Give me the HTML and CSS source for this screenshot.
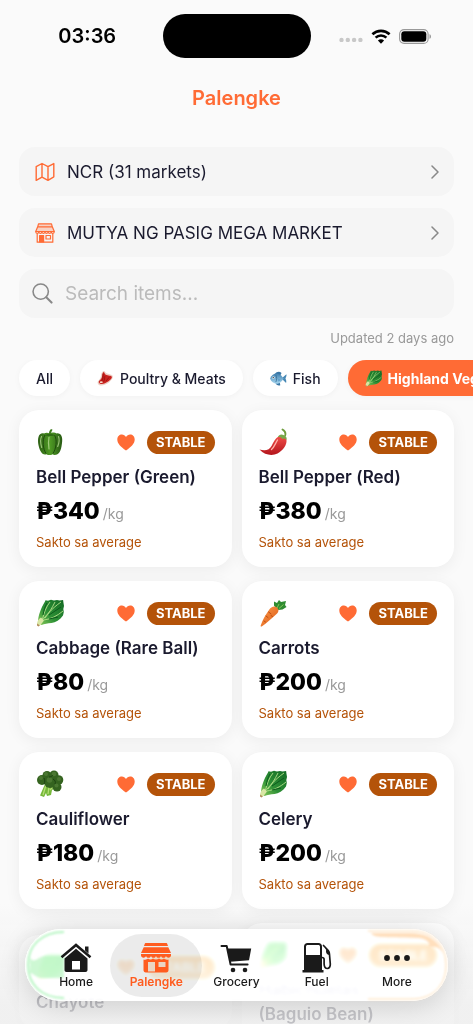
FILE: index.html
```html
<!DOCTYPE html>
<html lang="fil">
<head>
    <meta charset="UTF-8">
    <meta name="viewport" content="width=device-width, initial-scale=1.0">
    <title>Palengke</title>
    <link rel="stylesheet" href="styles.css">
</head>
<body>
    <!-- Shared icons -->
    <svg class="sprite" aria-hidden="true">
        <defs>
            <linearGradient id="g-pepper" x1="0" x2="1"><stop offset="0" stop-color="#2c5f14"/><stop offset=".5" stop-color="#4f9a24"/><stop offset="1" stop-color="#285a13"/></linearGradient>
            <linearGradient id="g-chili" x1="0" y1="0" x2="0" y2="1"><stop offset="0" stop-color="#f4504a"/><stop offset="1" stop-color="#b3151c"/></linearGradient>
            <linearGradient id="g-leaf" x1="0" y1="1" x2="1" y2="0"><stop offset="0" stop-color="#8ccb5a"/><stop offset=".4" stop-color="#2e9136"/><stop offset="1" stop-color="#126a24"/></linearGradient>
            <linearGradient id="g-carrot" x1="0" y1="0" x2="1" y2="1"><stop offset="0" stop-color="#ff9a4a"/><stop offset="1" stop-color="#d95a16"/></linearGradient>
            <linearGradient id="g-fish" x1="0" y1="0" x2="0" y2="1"><stop offset="0" stop-color="#3f7fae"/><stop offset="1" stop-color="#a9d8f0"/></linearGradient>
        </defs>
        <symbol id="pepper" viewBox="0 0 28 28">
            <path d="M13 7c-.2-3 .3-4.500 2-6l1.600.8c-1.300 1.500-1.500 3-1.200 5.200z" fill="#3f7d1e"/>
            <path d="M14 6c2-2 5-1.600 6.500-.6 4.600-.6 6.500 3.600 5.500 9.600-.6 5-1.500 10-5 11.500-2 .8-3.500.5-4.500-.3-1.500 1.200-4.500 1.200-6 0-2 .6-4.500.2-6-3.200C2.500 19 1.300 13 2.500 9c.8-3 3-4.200 5.500-3.500C10 4.500 12.500 4.700 14 6z" fill="url(#g-pepper)"/>
            <path d="M9 7c-3 5-2 14 1 18.500M18.500 7c3 5 1.500 14-1.500 18.500" fill="none" stroke="#1f4a0e" stroke-width="1"/>
            <path d="M5.500 8.500c-1.500 3-1 7 .2 11M13 9c-.8 4-.6 8 0 12M22.500 8.500c1.200 3 .4 7-.8 10" fill="none" stroke="#b9dc95" stroke-width="1.200" stroke-linecap="round" opacity=".75"/>
            <path d="M9 7.500c2-2 7-2.500 10 0-2 .2-3 .8-5 .4-2 .6-3 0-5-.4z" fill="#2f6a15"/>
        </symbol>
        <symbol id="chili" viewBox="0 0 28 28">
            <path d="M26 8c1-2.500 0-5-2.500-6.500" fill="none" stroke="#6f9d3d" stroke-width="1.800" stroke-linecap="round"/>
            <path d="M19.500 8.500c3-2.500 7.500-.5 8 3.500.5 5-3.500 10.500-9 13.500-5 2.500-12.500 2-18-4 6 1.500 10 .5 12-3.500 2.200-4 3.500-7.500 7-9.500z" fill="url(#g-chili)"/>
            <path d="M18.500 12c-2.500 4-3 7-6 9.500" fill="none" stroke="#ffb3a8" stroke-width="1.300" stroke-linecap="round"/>
            <path d="M19 9c1-3 5-4 8.500.5.3 1.200.2 2-.3 2.500-1.500-1.800-2.700-1.700-3.700-.8-.7-1.800-2.500-2.300-4.500-2.200z" fill="#79a84a"/>
        </symbol>
        <symbol id="leafy" viewBox="0 0 28 28">
            <path d="M2 23C2 17 5 9 9 2.500l.5-1.300 2.500.6 3-1 3 .8 3-.6 2.500.6 3.600-.6.400 3 .5 3-.7 3 .5 3-.8 3.500c-3 4.500-7.500 6.800-11.500 7.500-4 .5-7 .5-10 2z" fill="url(#g-leaf)"/>
            <path d="M4 24C9 18 15 10 25 3M6.500 20C8 14 10 8 14 3M9 19c4-5 7-10 10-16M8 21c7-1 13-4 19-9" fill="none" stroke="#b4e08a" stroke-width=".9"/>
            <path d="M7 16c1-5 2-9 4-12M13 16l12-8M13 20l9-2" fill="none" stroke="#0c5a1c" stroke-width="1"/>
            <path d="M1 25c.2-3 1.500-5 4-6.500l3 3C6.500 24 5 25 4.500 26l-2 1z" fill="#d9e6a4"/>
            <path d="M1.200 24.600l2.700 2-1.500.8-1.400-1z" fill="#b08a5a"/>
        </symbol>
        <symbol id="carrot" viewBox="0 0 28 28">
            <path d="M15 6.500l0-4 3 1.500 2-3 2 2 5-1-1 4 1.500 2-4 2.500-4 .5-3-2.500z" fill="#2f8b31"/>
            <path d="M18 9l2-4M20 9.500l4.500-4" fill="none" stroke="#81c654" stroke-width="1"/>
            <path d="M10 11c1.800-3 5.500-4.500 8-2.500 2.500 2.500 1.500 5-1 7-5 4.200-9 8.500-14.300 12-.8.300-1.300-.2-1-.9C3.500 21 6.500 16 10 11z" fill="url(#g-carrot)"/>
            <path d="M9.500 13l2.500 1.800M7 17l2 1.500M13.500 17.500l-1.500-1M5 22l1.500 1" stroke="#b94a10" stroke-width=".9" stroke-linecap="round"/>
        </symbol>
        <symbol id="broccoli" viewBox="0 0 28 28">
            <path d="M9 14l-5 11.500 4 1.500 2-4 1 3 4-1 1-5 5-3-3-5z" fill="#76b83a"/>
            <path d="M10 15L7 25M13 17l-1 7M18 16l-4 4" fill="none" stroke="#b6de76" stroke-width="1.300"/>
            <g fill="#34631f"><circle cx="6" cy="10" r="5"/><circle cx="11" cy="5.500" r="4.500"/><circle cx="18" cy="5" r="4.500"/><circle cx="22.500" cy="10" r="4.800"/><circle cx="21" cy="17" r="4.500"/><circle cx="14" cy="12" r="6"/></g>
            <g fill="#4b7832"><circle cx="5" cy="8" r="2"/><circle cx="10" cy="4" r="2"/><circle cx="18" cy="4" r="2.300"/><circle cx="23" cy="9" r="2"/><circle cx="13.500" cy="10" r="2.800"/><circle cx="20.500" cy="15.500" r="2"/></g>
            <path d="M8 8c1 2 1 4 0 6M17 9c2 1 3 3 2 5M13 7c2 0 3-1 4-2" fill="none" stroke="#1d4212" stroke-width="1"/>
        </symbol>
        <symbol id="meat" viewBox="0 0 28 28">
            <path d="M1 20c0-2 4-4 5-8 .8-4 1-8 4-10 1.500-1 3 0 4 2 2 3 10 2 12 6 1 3-2 7-6 10S8 27 4 25c-2-1-3-3-3-5z" fill="#ecd0c6"/>
            <path d="M3 19c1-2 4-3.500 5-7 1-3.500.5-6.500 2.500-8.500C12 3 12 5 13.500 7c2 2.500 9 1.500 11 4 .5 2-2 5-5.500 7.500C14 22 9 24 5 22.500 3.500 22 2.500 20.500 3 19z" fill="#c9211e"/>
            <path d="M10 6c-.5 6 1 8-3 13M13 10c-1 4 0 5-2 9M20 12l-5 6" fill="none" stroke="#94100f" stroke-width="1.400"/>
            <ellipse cx="7" cy="20" rx="2.500" ry="1.500" fill="#f3d9c8"/>
        </symbol>
        <symbol id="fish" viewBox="0 0 28 28">
            <path d="M8 7c3-5 8-5 11-2l-2 4zM9 21c1 4 5 5 8 4l-1-5z" fill="#3a76a5"/>
            <path d="M19 14l8-7c.8 3-.8 5-1.500 7 .8 2 2 4 1 7.500z" fill="#4788b5"/>
            <path d="M0 14c3-7 8-9 13-8 4 1 7 4 9.500 8-3 5-6 8-10.500 8.500C7 23 2 20 0 14z" fill="url(#g-fish)"/>
            <path d="M9.500 8c2 4 2 8 0 12" fill="none" stroke="#2f6894" stroke-width="1.200"/>
            <path d="M13 14l5 2-4 3z" fill="#5e9fca"/>
            <circle cx="5.500" cy="12.500" r="2" fill="#fff"/><circle cx="5.300" cy="12.500" r="1.100" fill="#111"/>
        </symbol>
        <symbol id="heart" viewBox="0 0 18 17">
            <path d="M9 16.500C3.800 12.800.3 9.400.3 5.400.3 2.600 2.300.5 4.900.5 6.600.5 8.100 1.500 9 3 9.900 1.500 11.400.5 13.100.5c2.600 0 4.600 2.100 4.600 4.900 0 4-3.500 7.400-8.700 11.100z" fill="currentColor"/>
        </symbol>
        <symbol id="chevron" viewBox="0 0 8 14">
            <path d="M1 1l6 6-6 6" fill="none" stroke="currentColor" stroke-width="1.500" stroke-linecap="round" stroke-linejoin="round"/>
        </symbol>
    </svg>

    <div class="app">
        <div class="status-bar">
            <span class="time">03:36</span>
            <span class="island"></span>
            <span class="signals">
                <svg width="24" height="12" viewBox="0 0 24 12" fill="#c8c8c8"><circle cx="2.500" cy="10" r="2.200"/><circle cx="8.800" cy="10" r="2.200"/><circle cx="15.100" cy="10" r="2.200"/><circle cx="21.400" cy="10" r="2.200"/></svg>
                <svg width="20" height="15" viewBox="0 0 20 15"><path d="M1.400 5.300C6.200.7 13.800.7 18.600 5.300" fill="none" stroke="#000" stroke-width="2.600"/><path d="M4.600 8.700c3-2.900 7.800-2.900 10.800 0" fill="none" stroke="#000" stroke-width="2.500"/><path d="M10 14.700l-3.100-3.200c1.700-1.600 4.500-1.600 6.200 0z"/></svg>
                <svg width="33" height="15" viewBox="0 0 33 15"><rect x=".6" y=".6" width="28.500" height="13.800" rx="4.500" fill="none" stroke="#999" stroke-width="1.100"/><rect x="2.300" y="2.300" width="25" height="10.400" rx="3"/><path d="M30.500 5.200c2 .6 2 4 0 4.600z" fill="#999"/></svg>
            </span>
        </div>

        <header>
            <h1>Palengke</h1>
        </header>

        <main>
            <div class="filters">
                <button class="field" type="button">
                    <svg class="field-icon" viewBox="0 0 20 20" fill="none" stroke="currentColor" stroke-width="1.400" stroke-linejoin="round"><path d="M1.200 4.600L7 1.500l6 3.200 5.800-3.100v13.200L13 18.300l-6-3.200-5.800 3.200zM7 1.500v13.600M13 4.700v13.600"/></svg>
                    <span>NCR (31 markets)</span>
                    <svg class="chevron"><use href="#chevron"/></svg>
                </button>
                <button class="field" type="button">
                    <svg class="field-icon" viewBox="0 0 20 20" fill="none" stroke="currentColor" stroke-width="1.200" stroke-linejoin="round"><path d="M3.500.8h13l.8 3H2.700zM2.700 3.800h14.600l2 4.700H.7z" fill="#ff6b35" fill-opacity=".25"/><path d="M.7 8.500c0 2.400 3.100 2.400 3.100 0 0 2.400 3.100 2.400 3.100 0 0 2.400 3.100 2.400 3.100 0 0 2.400 3.100 2.400 3.100 0 0 2.400 3.100 2.400 3.100 0 0 2.400 3.100 2.400 3.100 0M2.200 10.500v8.700h15.600v-8.700"/><path d="M4.600 12.500h4v6.500h-4z" fill="currentColor"/><path d="M11 12.500h4.500v3.500H11z"/></svg>
                    <span>MUTYA NG PASIG MEGA MARKET</span>
                    <svg class="chevron"><use href="#chevron"/></svg>
                </button>
                <label class="field search">
                    <svg class="search-icon" viewBox="0 0 20 20" fill="none" stroke="currentColor" stroke-width="1.500" stroke-linecap="round"><circle cx="8.300" cy="8.200" r="7.300"/><path d="M13.600 13.600l5 5" stroke-width="2"/></svg>
                    <input type="search" placeholder="Search items..." aria-label="Search items">
                </label>
            </div>

            <p class="updated">Updated 2 days ago</p>

            <div class="chips">
                <button class="chip" type="button">All</button>
                <button class="chip" type="button"><svg><use href="#meat"/></svg>Poultry &amp; Meats</button>
                <button class="chip" type="button"><svg><use href="#fish"/></svg>Fish</button>
                <button class="chip active" type="button"><svg><use href="#leafy"/></svg>Highland Vegetables</button>
            </div>

            <section class="items">
                <article class="card">
                    <div class="card-top">
                        <svg class="emoji"><use href="#pepper"/></svg>
                        <button class="fav" type="button" aria-label="Favorite"><svg><use href="#heart"/></svg></button>
                        <span class="badge">STABLE</span>
                    </div>
                    <h2>Bell Pepper (Green)</h2>
                    <p class="price">₱340<small>/kg</small></p>
                    <p class="note">Sakto sa average</p>
                </article>
                <article class="card">
                    <div class="card-top">
                        <svg class="emoji"><use href="#chili"/></svg>
                        <button class="fav" type="button" aria-label="Favorite"><svg><use href="#heart"/></svg></button>
                        <span class="badge">STABLE</span>
                    </div>
                    <h2>Bell Pepper (Red)</h2>
                    <p class="price">₱380<small>/kg</small></p>
                    <p class="note">Sakto sa average</p>
                </article>
                <article class="card">
                    <div class="card-top">
                        <svg class="emoji"><use href="#leafy"/></svg>
                        <button class="fav" type="button" aria-label="Favorite"><svg><use href="#heart"/></svg></button>
                        <span class="badge">STABLE</span>
                    </div>
                    <h2>Cabbage (Rare Ball)</h2>
                    <p class="price">₱80<small>/kg</small></p>
                    <p class="note">Sakto sa average</p>
                </article>
                <article class="card">
                    <div class="card-top">
                        <svg class="emoji"><use href="#carrot"/></svg>
                        <button class="fav" type="button" aria-label="Favorite"><svg><use href="#heart"/></svg></button>
                        <span class="badge">STABLE</span>
                    </div>
                    <h2>Carrots</h2>
                    <p class="price">₱200<small>/kg</small></p>
                    <p class="note">Sakto sa average</p>
                </article>
                <article class="card">
                    <div class="card-top">
                        <svg class="emoji"><use href="#broccoli"/></svg>
                        <button class="fav" type="button" aria-label="Favorite"><svg><use href="#heart"/></svg></button>
                        <span class="badge">STABLE</span>
                    </div>
                    <h2>Cauliflower</h2>
                    <p class="price">₱180<small>/kg</small></p>
                    <p class="note">Sakto sa average</p>
                </article>
                <article class="card">
                    <div class="card-top">
                        <svg class="emoji"><use href="#leafy"/></svg>
                        <button class="fav" type="button" aria-label="Favorite"><svg><use href="#heart"/></svg></button>
                        <span class="badge">STABLE</span>
                    </div>
                    <h2>Celery</h2>
                    <p class="price">₱200<small>/kg</small></p>
                    <p class="note">Sakto sa average</p>
                </article>
                <article class="card">
                    <div class="card-top">
                        <svg class="emoji"><use href="#leafy"/></svg>
                        <button class="fav" type="button" aria-label="Favorite"><svg><use href="#heart"/></svg></button>
                        <span class="badge">STABLE</span>
                    </div>
                    <h2>Chayote</h2>
                </article>
                <article class="card">
                    <div class="card-top">
                        <svg class="emoji"><use href="#leafy"/></svg>
                        <button class="fav" type="button" aria-label="Favorite"><svg><use href="#heart"/></svg></button>
                        <span class="badge">STABLE</span>
                    </div>
                    <h2>Habichuelas<br>(Baguio Bean)</h2>
                </article>
            </section>
        </main>

        <div class="fade"></div>
        <nav class="tab-bar">
            <svg class="edge edge-left" viewBox="0 0 40 72" fill="none" stroke="#b5f5c1" stroke-width="2"><path d="M39 3C16 3 3 17 3 36s13 33 36 33"/><path d="M5 28c3 8 8 0 14-1h20v22H19C12 50 8 44 5 44z" fill="#b8f5c0" stroke="none" opacity=".7"/></svg>
            <svg class="edge edge-right" viewBox="0 0 80 72" fill="none" stroke="#ffdcb0" stroke-width="2"><path d="M0 2h44c21 0 34 14 34 34S65 70 44 70H0" stroke-width="1"/><path d="M3 4c3 5 10 4 46 5 8 0 15 5 11 9h8c6 2 9 8 9 18 0-18-12-32-33-32z" fill="#ffdfbd" stroke="none"/></svg>
            <a href="#home">
                <svg viewBox="0 0 32 32" fill="currentColor"><path d="M16 1.200l15.300 13-1.600 2L16 4.700 2.300 16.200l-1.600-2zM25 4.500h3.500v7L25 8.500z"/><path d="M16 6.800l11.500 9.700V28c0 1.200-.8 2-2 2H20v-11h-8v11H6.500c-1.200 0-2-.8-2-2V16.500z"/><path d="M8 27.500h16V30H8z"/></svg>
                Home
            </a>
            <a href="#palengke" class="active">
                <svg viewBox="0 0 32 32"><g fill="currentColor"><path d="M6 1h20c.8 0 1.200.5 1.400 1.200L28 4H4l.6-1.800C4.800 1.500 5.200 1 6 1zM3.700 5.200h24.600L31 11H1z"/><path d="M1 12h30v1.200c0 3-4.300 3.200-5 .7-.7 2.500-4.300 2.500-5 0-.7 2.500-4.300 2.500-5 0-.7 2.500-4.300 2.500-5 0-.7 2.500-4.300 2.500-5 0-.7 2.500-5 2.300-5-.7z"/><path d="M3.500 17.500c2 .5 3.500 0 4.500-1 1.500 1.300 3.500 1.300 5 0 1.500 1.300 4.500 1.300 6 0 1.500 1.300 3.500 1.300 5 0 1 1 2.500 1.500 4.500 1V28c0 1.500-.8 2.500-2.300 2.500H5.800c-1.500 0-2.300-1-2.300-2.500z"/></g><path d="M8 20h7v9.500H8zM18.500 20h7v5h-7z" fill="#ead5c4"/></svg>
                Palengke
            </a>
            <a href="#grocery">
                <svg viewBox="0 0 32 32" fill="currentColor"><path d="M1.500 4h5.200l3.900 18.500h17" fill="none" stroke="currentColor" stroke-width="2" stroke-linecap="round" stroke-linejoin="round"/><path d="M7 6.500h24.200L29 18.200l-18.700 1.600z"/><circle cx="13" cy="28" r="2.300"/><circle cx="25" cy="28" r="2.300"/></svg>
                Grocery
            </a>
            <a href="#fuel">
                <svg viewBox="0 0 32 32" fill="currentColor"><path d="M6.500 1h11C19.500 1 21 2.500 21 4.500V28h1.500v2.500h-21V28H3V4.500C3 2.500 4.500 1 6.500 1zm.2 2c-1 0-1.700.7-1.700 1.700V13h14V4.700c0-1-.7-1.700-1.700-1.700z"/><path d="M22.500 3.500l4.800 5c1.100 1.200 1.200 2.200 1.200 4l.8 9.500c.3 6-6 6-6.200 0v-4.500c0-1.500-.7-2-2.100-2" fill="none" stroke="currentColor" stroke-width="1.700" stroke-linecap="round"/><path d="M24 5.500l3.300 3c1 .8 1.400 3 .8 4.500-2-.2-3.600-2-3-5z"/></svg>
                Fuel
            </a>
            <a href="#more">
                <svg viewBox="0 0 32 32" fill="currentColor"><circle cx="6" cy="16" r="2.900"/><circle cx="16" cy="16" r="2.900"/><circle cx="26" cy="16" r="2.900"/></svg>
                More
            </a>
        </nav>
    </div>
</body>
</html>
```
FILE: styles.css
```css
* {
    box-sizing: border-box;
}
body {
    font-family: Inter, 'Noto Sans', sans-serif;
    background-color: #fafafa;
    color: #1a1a2e;
    margin: 0;
}
h1, h2, p {
    margin: 0;
}
button, input {
    font: inherit;
    color: inherit;
    border: none;
    background: none;
    padding: 0;
}
button {
    cursor: pointer;
}
.sprite {
    position: absolute;
    width: 0;
    height: 0;
}
.app {
    height: 100vh;
    overflow: hidden;
}
.status-bar {
    display: grid;
    grid-template-columns: 1fr auto 1fr;
    align-items: center;
    height: 72px;
    padding: 0 12px;
    color: #000;
}
.time {
    font-size: 20px;
    font-weight: 600;
    text-align: center;
}
.island {
    width: 148px;
    height: 44px;
    border-radius: 22px;
    background-color: #000;
}
.signals {
    display: flex;
    justify-content: center;
    align-items: center;
    gap: 8px;
}
header {
    padding: 12px 20px 35px;
    text-align: center;
}
h1 {
    font-size: 20px;
    font-weight: 600;
    line-height: 28px;
    color: #ff6b35;
}
main {
    padding: 0 19px 120px;
}
.filters {
    display: flex;
    flex-direction: column;
    gap: 12px;
}
.field {
    display: flex;
    align-items: center;
    gap: 12px;
    height: 49px;
    padding: 0 15px 0 16px;
    border-radius: 16px;
    background-color: #f5f5f5;
    font-size: 17px;
    text-align: left;
}
.field span {
    flex: 1;
}
.field-icon {
    width: 20px;
    height: 20px;
    color: #ff6b35;
}
.chevron {
    width: 8px;
    height: 14px;
    color: #888;
}
.search {
    padding-left: 13px;
    font-size: 19px;
}
.search-icon {
    width: 21px;
    height: 21px;
    color: #888;
}
.search input {
    flex: 1;
    min-width: 0;
    outline: none;
}
.search input::placeholder {
    color: #bbb;
    opacity: 1;
}
.updated {
    padding: 10px 0 12px;
    font-size: 13px;
    line-height: 20px;
    text-align: right;
    color: #999;
}
.chips {
    display: flex;
    gap: 10px;
    margin: 0 -19px;
    padding: 0 19px 14px;
    overflow: hidden;
}
.chip {
    display: flex;
    flex: none;
    align-items: center;
    gap: 6px;
    height: 36px;
    padding: 0 17px;
    border-radius: 18px;
    background-color: #fff;
    box-shadow: 0 1px 6px rgba(0, 0, 0, 0.04);
    font-size: 14px;
    font-weight: 500;
}
.chip svg {
    width: 17px;
    height: 17px;
}
.chip.active {
    background-color: #ff6b35;
    color: #fff;
    font-weight: 700;
}
.items {
    display: grid;
    grid-template-columns: 1fr 1fr;
    gap: 14px 10px;
    align-items: center;
}
.card {
    padding: 17px 17px 16px;
    border-radius: 20px;
    background-color: #fff;
    box-shadow: 0 3px 16px rgba(0, 0, 0, 0.06);
}
.card-top {
    display: flex;
    align-items: center;
    height: 30px;
    margin-bottom: 8px;
}
.emoji {
    width: 28px;
    height: 28px;
    margin-right: auto;
}
.fav {
    display: flex;
    margin-right: 12px;
    color: #ff6b35;
}
.fav svg {
    width: 18px;
    height: 17px;
}
.badge {
    padding: 0 9px;
    border-radius: 12px;
    background-color: #b45309;
    color: #fff;
    font-size: 13px;
    font-weight: 700;
    line-height: 23px;
}
h2 {
    font-size: 17px;
    font-weight: 600;
    line-height: 24px;
}
.price {
    display: flex;
    align-items: baseline;
    gap: 3px;
    height: 28px;
    margin: 8px 0;
    font-size: 23px;
    font-weight: 800;
    line-height: 28px;
    color: #000;
}
.price small {
    font-size: 14px;
    font-weight: 400;
    color: #999;
}
.note {
    font-size: 13px;
    line-height: 18px;
    color: #b45309;
}
.fade {
    position: fixed;
    left: 0;
    right: 0;
    bottom: 0;
    height: 120px;
    background: linear-gradient(rgba(238, 238, 238, 0), rgba(238, 238, 238, 0.8) 85%);
    pointer-events: none;
}
.tab-bar {
    position: fixed;
    left: 25px;
    right: 25px;
    bottom: 23px;
    display: grid;
    grid-template-columns: repeat(5, 1fr);
    height: 72px;
    padding: 5px 11px 4px;
    border-radius: 36px;
    background-color: rgba(255, 255, 255, 0.8);
    backdrop-filter: blur(2px) saturate(300%) brightness(115%);
    box-shadow: 0 4px 28px rgba(0, 0, 0, 0.16), inset 0 0 0 1px #fff;
}
.tab-bar a {
    display: flex;
    flex-direction: column;
    align-items: center;
    justify-content: center;
    position: relative;
    color: #1a1a1a;
    font-size: 12px;
    font-weight: 500;
    line-height: 16px;
    text-decoration: none;
}
.tab-bar a svg {
    width: 32px;
    height: 32px;
}
.tab-bar .active {
    margin: 0 -6px;
    border-radius: 32px;
    background-color: rgba(0, 0, 0, 0.08);
    color: #ff5c1f;
    font-weight: 600;
}
.edge {
    position: absolute;
    top: 0;
    height: 72px;
    filter: blur(1px);
}
.edge-left {
    left: 0;
    width: 40px;
}
.edge-right {
    right: 0;
    width: 80px;
}
```
